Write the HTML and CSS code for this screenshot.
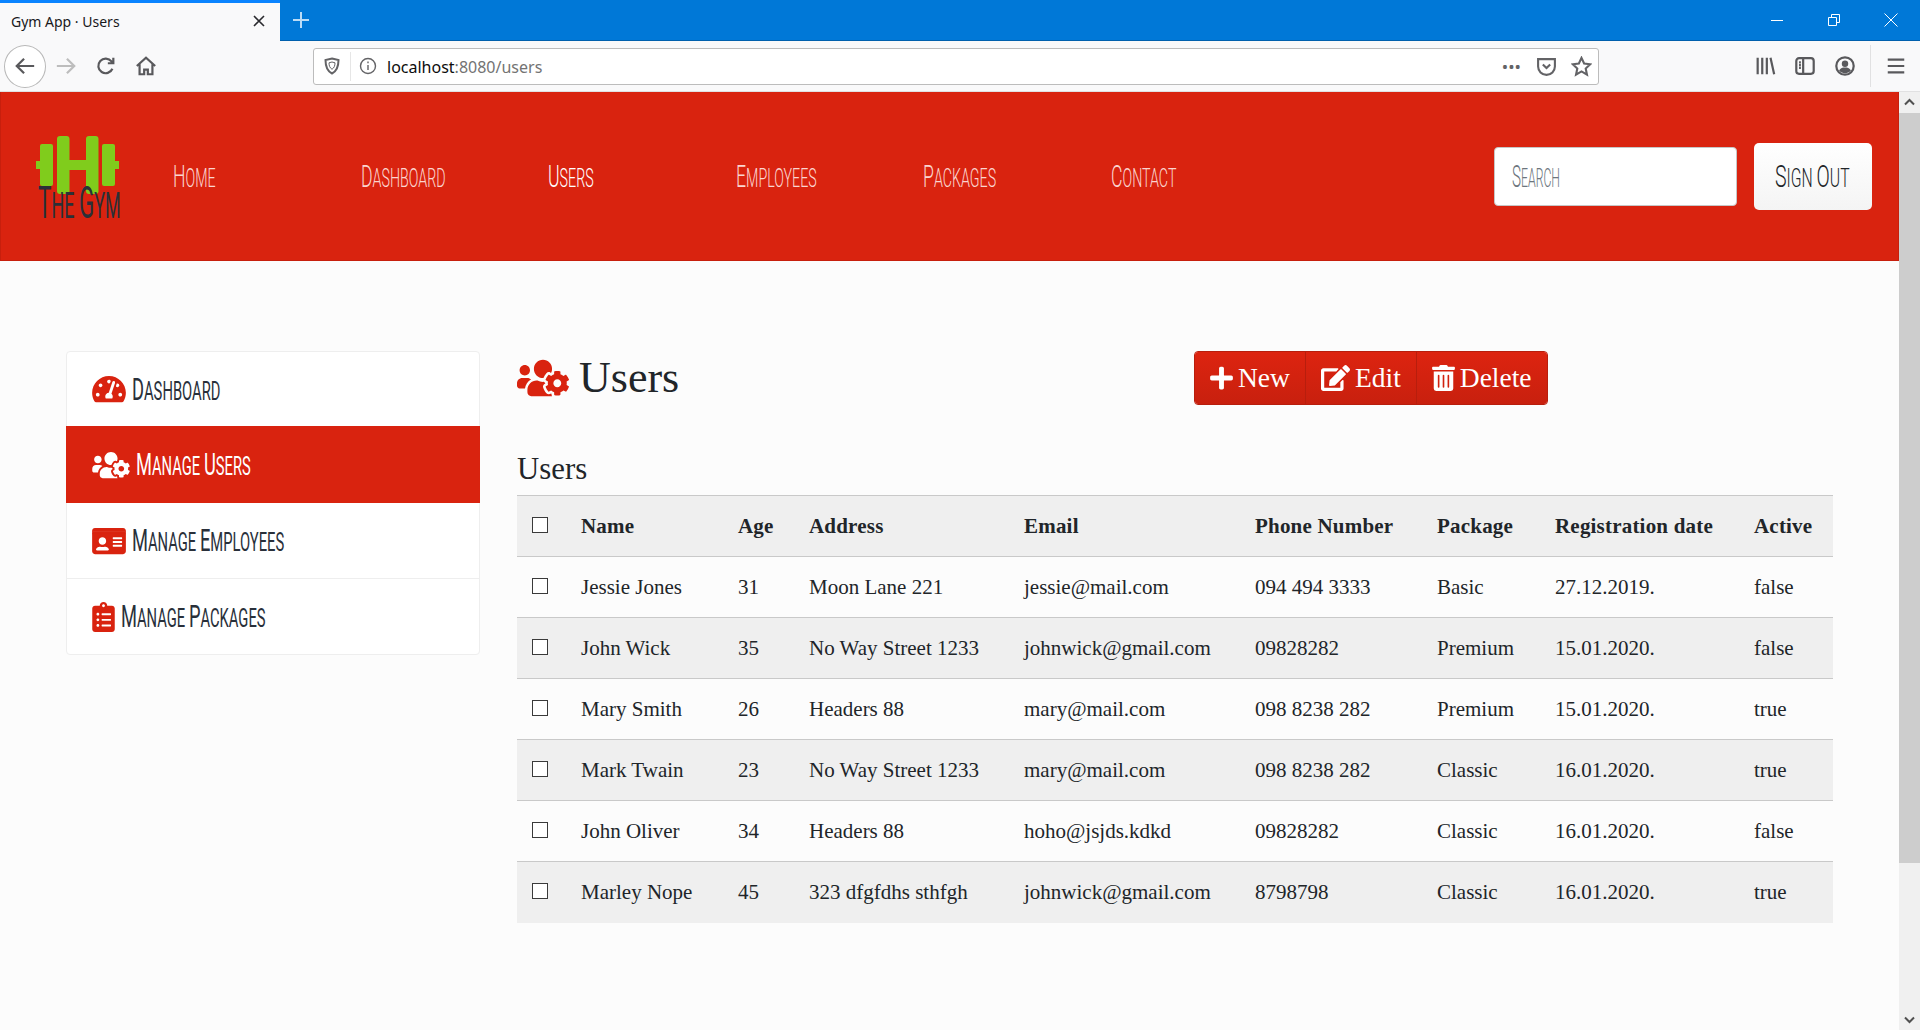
FILE: index.html
```html
<!DOCTYPE html>
<html lang="en">
<head>
    <meta charset="UTF-8">
    <title>Gym App - Users</title>
    <link rel="stylesheet" href="styles.css">
</head>
<body>
    <div class="tabbar">
        <div class="tab">
            <span class="tab-title">Gym App · Users</span>
            <svg class="tab-close" viewBox="0 0 16 16"><path d="M3 3l10 10M13 3L3 13"/></svg>
        </div>
        <svg class="new-tab" viewBox="0 0 18 18"><path d="M9 1v16M1 9h16"/></svg>
        <div class="window-controls">
            <svg viewBox="0 0 14 14"><path d="M1 7.5h12"/></svg>
            <svg viewBox="0 0 14 14"><path d="M1.5 4.5h8v8h-8zM4.5 4.500v-3h8v8h-3"/></svg>
            <svg viewBox="0 0 14 14"><path d="M.5.5l13 13M13.500.5l-13 13"/></svg>
        </div>
    </div>

    <div class="toolbar">
        <div class="back-button">
            <svg class="tool-icon" viewBox="0 0 24 24"><path d="M22 12H3M11 4l-8 8 8 8"/></svg>
        </div>
        <svg class="tool-icon forward" viewBox="0 0 24 24"><path d="M2 12h19M13 4l8 8-8 8"/></svg>
        <svg class="tool-icon reload" viewBox="0 0 24 24"><path d="M19 15a8 8 0 1 1-1-8l2 2M20 3v6h-6"/></svg>
        <svg class="tool-icon home" viewBox="0 0 24 24"><path d="M2 12L12 3l10 9M5 10v11h5v-5h4v5h5V10"/></svg>
        <div class="urlbar">
            <svg class="url-icon shield" viewBox="0 0 16 18"><path d="M8 1.500l6.500 1.500c0 7-1.500 11-6.500 13.500C3 14 1.500 10 1.500 3z"/><path class="shield-inner" d="M8 5l3 .8c0 3-.8 5-3 6.500-2.200-1.500-3-3.500-3-6.500z"/></svg>
            <span class="url-divider"></span>
            <svg class="url-icon info" viewBox="0 0 18 18"><circle cx="9" cy="9" r="7.500"/><path d="M9 8v5M9 4.500v1.800"/></svg>
            <span class="url-text">localhost<span class="url-muted">:8080/users</span></span>
            <span class="url-dots">•••</span>
            <svg class="url-icon pocket" viewBox="0 0 20 20"><path d="M2 3h16v7a8 8 0 0 1-16 0z"/><path d="M6.500 8l3.500 3.500L13.500 8"/></svg>
            <svg class="url-icon star" viewBox="0 0 20 20"><path d="M10 1.800l2.500 5.400 5.800.7-4.300 4 1.200 5.800-5.200-3-5.200 3L6 11.900l-4.300-4 5.800-.7z"/></svg>
        </div>
        <div class="tool-right">
            <svg class="tool-icon" viewBox="0 0 24 24"><path d="M4 3v18M9 3v18M14 3v18M18 3l4 18"/></svg>
            <svg class="tool-icon" viewBox="0 0 24 24"><rect x="2.500" y="3.500" width="19" height="17" rx="3"/><path d="M10 3.500v17M5.500 8h2M5.500 11h2M5.500 14h2"/></svg>
            <svg class="tool-icon" viewBox="0 0 24 24"><circle cx="12" cy="12" r="9.500"/><circle class="solid" cx="12" cy="9.500" r="3.500"/><path class="solid" d="M5.500 17c1.500-3 4-3.500 6.500-3.500s5 .5 6.500 3.500c-3.500 3.800-9.500 3.800-13 0z"/></svg>
            <span class="tool-divider"></span>
            <svg class="tool-icon" viewBox="0 0 24 24"><path d="M3 5h18M3 12h18M3 19h18"/></svg>
        </div>
    </div>

    <div class="viewport">
        <div class="page">
            <header class="navbar">
                <a class="brand">
                    <svg class="brand-mark" viewBox="0 0 83 58">
                        <rect x="0" y="25" width="5" height="8"/>
                        <rect x="78" y="25" width="5" height="8"/>
                        <rect x="4" y="8" width="13" height="42" rx="2"/>
                        <rect x="21" y="0" width="12.500" height="58" rx="3"/>
                        <rect x="50" y="0" width="12.500" height="58" rx="3"/>
                        <rect x="66" y="8" width="13" height="42" rx="2"/>
                        <rect x="30" y="24" width="24" height="10"/>
                    </svg>
                    <span class="brand-name narrow"><span class="cap">T</span>he <span class="cap">G</span>ym</span>
                </a>
                <nav class="nav-links">
                    <a class="nav-link dim"><span class="narrow"><span class="cap">H</span>ome</span></a>
                    <a class="nav-link dim"><span class="narrow"><span class="cap">D</span>ashboard</span></a>
                    <a class="nav-link"><span class="narrow"><span class="cap">U</span>sers</span></a>
                    <a class="nav-link dim"><span class="narrow"><span class="cap">E</span>mployees</span></a>
                    <a class="nav-link dim"><span class="narrow"><span class="cap">P</span>ackages</span></a>
                    <a class="nav-link dim"><span class="narrow"><span class="cap">C</span>ontact</span></a>
                </nav>
                <div class="search-box"><span class="narrow"><span class="cap">S</span>earch</span></div>
                <button class="signout"><span class="narrow"><span class="cap">S</span>ign <span class="cap">O</span>ut</span></button>
            </header>

            <main class="content">
                <aside class="side-menu">
                    <a class="side-item">
                        <svg class="side-icon gauge" viewBox="0 0 576 512"><path d="M288 32C128.94 32 0 160.94 0 320c0 52.800 14.250 102.260 39.060 144.800 5.610 9.620 16.300 15.200 27.440 15.200h443c11.140 0 21.830-5.580 27.440-15.200C561.750 422.260 576 372.800 576 320c0-159.060-128.940-288-288-288zm0 64c14.710 0 26.580 10.130 30.320 23.650-1.110 2.260-2.640 4.230-3.450 6.670l-9.220 27.670c-5.130 3.490-10.970 6.010-17.640 6.010-17.670 0-32-14.330-32-32S270.330 96 288 96zM96 384c-17.670 0-32-14.330-32-32s14.330-32 32-32 32 14.330 32 32-14.330 32-32 32zm48-160c-17.670 0-32-14.330-32-32s14.330-32 32-32 32 14.330 32 32-14.330 32-32 32zm246.770-72.410l-61.330 184C343.130 347.330 352 364.540 352 384c0 11.720-3.380 22.550-8.880 32H232.880c-5.500-9.450-8.880-20.280-8.880-32 0-33.940 26.500-61.430 59.900-63.590l61.340-184.010c4.170-12.560 17.730-19.450 30.360-15.170 12.570 4.190 19.350 17.790 15.170 30.360zm14.660 57.200l15.520-46.550c3.470-1.290 7.130-2.230 11.050-2.230 17.670 0 32 14.330 32 32s-14.330 32-32 32c-11.380-.01-20.890-6.280-26.570-15.220zM480 384c-17.670 0-32-14.330-32-32s14.330-32 32-32 32 14.330 32 32-14.330 32-32 32z"/></svg>
                        <span class="narrow"><span class="cap">D</span>ashboard</span>
                    </a>
                    <a class="side-item active">
                        <svg class="side-icon cog" viewBox="0 0 640 512"><use href="#users-cog"/></svg>
                        <span class="narrow"><span class="cap">M</span>anage <span class="cap">U</span>sers</span>
                    </a>
                    <a class="side-item">
                        <svg class="side-icon card" viewBox="0 0 576 512"><rect x="0" y="90" width="576" height="50"/><path d="M528 32H48C21.500 32 0 53.500 0 80v16h576V80c0-26.500-21.500-48-48-48zM0 432c0 26.500 21.500 48 48 48h480c26.500 0 48-21.500 48-48V128H0v304zm352-232c0-4.400 3.600-8 8-8h144c4.400 0 8 3.600 8 8v16c0 4.400-3.600 8-8 8H360c-4.400 0-8-3.600-8-8v-16zm0 64c0-4.400 3.600-8 8-8h144c4.400 0 8 3.600 8 8v16c0 4.400-3.600 8-8 8H360c-4.400 0-8-3.600-8-8v-16zm0 64c0-4.400 3.600-8 8-8h144c4.400 0 8 3.600 8 8v16c0 4.400-3.600 8-8 8H360c-4.400 0-8-3.600-8-8v-16zM176 192c35.300 0 64 28.700 64 64s-28.700 64-64 64-64-28.700-64-64 28.700-64 64-64zM67.100 396.200C75.500 370.500 99.600 352 128 352h8.200c12.300 5.100 25.700 8 39.800 8s27.600-2.900 39.800-8h8.200c28.400 0 52.500 18.500 60.900 44.200 3.200 9.900-5.200 19.800-15.600 19.800H82.700c-10.400 0-18.800-10-15.600-19.800z"/></svg>
                        <span class="narrow"><span class="cap">M</span>anage <span class="cap">E</span>mployees</span>
                    </a>
                    <a class="side-item bordered">
                        <svg class="side-icon clip" viewBox="0 0 384 512"><path d="M336 64h-80c0-35.300-28.700-64-64-64s-64 28.700-64 64H48C21.500 64 0 85.500 0 112v352c0 26.500 21.500 48 48 48h288c26.500 0 48-21.500 48-48V112c0-26.500-21.500-48-48-48zM96 424c-13.300 0-24-10.700-24-24s10.700-24 24-24 24 10.700 24 24-10.700 24-24 24zm0-96c-13.300 0-24-10.700-24-24s10.700-24 24-24 24 10.700 24 24-10.700 24-24 24zm0-96c-13.300 0-24-10.700-24-24s10.700-24 24-24 24 10.700 24 24-10.700 24-24 24zm96-192c13.300 0 24 10.700 24 24s-10.700 24-24 24-24-10.700-24-24 10.700-24 24-24zm128 368c0 4.400-3.600 8-8 8H168c-4.400 0-8-3.600-8-8v-16c0-4.400 3.600-8 8-8h144c4.400 0 8 3.600 8 8v16zm0-96c0 4.400-3.600 8-8 8H168c-4.400 0-8-3.600-8-8v-16c0-4.400 3.600-8 8-8h144c4.400 0 8 3.600 8 8v16zm0-96c0 4.400-3.600 8-8 8H168c-4.400 0-8-3.600-8-8v-16c0-4.400 3.600-8 8-8h144c4.400 0 8 3.600 8 8v16z"/></svg>
                        <span class="narrow"><span class="cap">M</span>anage <span class="cap">P</span>ackages</span>
                    </a>
                </aside>

                <section class="users-panel">
                    <div class="panel-head">
                        <h1 class="page-title">
                            <svg class="title-icon" viewBox="0 0 640 512">
                                <defs>
                                    <path id="users-cog" d="M610.500 341.300c2.600-14.100 2.600-28.500 0-42.600l25.800-14.900c3-1.700 4.300-5.200 3.300-8.500-6.700-21.600-18.200-41.200-33.200-57.400-2.300-2.500-6-3.100-9-1.400l-25.800 14.900c-10.900-9.300-23.400-16.500-36.900-21.300v-29.800c0-3.400-2.400-6.400-5.700-7.100-22.300-5-45-4.800-66.200 0-3.300.7-5.700 3.700-5.700 7.100v29.800c-13.500 4.800-26 12-36.900 21.300l-25.800-14.900c-2.900-1.700-6.700-1.100-9 1.400-15 16.200-26.500 35.800-33.200 57.400-1 3.300.4 6.800 3.300 8.500l25.800 14.900c-2.600 14.100-2.600 28.500 0 42.600l-25.800 14.900c-3 1.700-4.300 5.200-3.300 8.500 6.700 21.600 18.200 41.100 33.200 57.400 2.300 2.500 6 3.100 9 1.400l25.800-14.900c10.900 9.300 23.400 16.500 36.900 21.300v29.800c0 3.400 2.400 6.400 5.700 7.100 22.300 5 45 4.800 66.200 0 3.300-.7 5.700-3.700 5.700-7.100v-29.800c13.500-4.800 26-12 36.900-21.300l25.800 14.900c2.900 1.700 6.700 1.100 9-1.400 15-16.200 26.500-35.800 33.200-57.400 1-3.300-.4-6.800-3.300-8.500l-25.800-14.900zM496 368.500c-26.800 0-48.500-21.800-48.500-48.500s21.800-48.500 48.500-48.500 48.500 21.800 48.500 48.500-21.700 48.500-48.500 48.500zM96 224c35.300 0 64-28.700 64-64s-28.700-64-64-64-64 28.700-64 64 28.700 64 64 64zm224 32c1.900 0 3.700-.5 5.600-.6 8.300-21.700 20.500-42.100 36.300-59.200 7.400-8 17.900-12.600 28.900-12.600 6.900 0 13.700 1.800 19.600 5.300l7.900 4.600c.8-.5 1.600-.9 2.400-1.400 7-14.600 11.200-30.800 11.200-48 0-61.900-50.100-112-112-112S208 82.100 208 144c0 61.900 50.100 112 112 112zm105.200 194.500c-2.300-1.200-4.600-2.600-6.800-3.900-8.200 4.800-15.300 9.800-27.500 9.800-10.900 0-21.400-4.600-28.900-12.600-18.300-19.800-32.300-43.900-40.200-69.600-10.700-34.500 24.900-49.700 25.800-50.300-.1-2.600-.1-5.200 0-7.800l-7.900-4.600c-3.800-2.200-7-5-9.800-8.100-3.300.2-6.500.6-9.800.6-24.600 0-47.600-6-68.500-16h-8.300C179.600 288 128 339.600 128 403.200V432c0 26.500 21.500 48 48 48h255.400c-3.700-6-6.200-12.800-6.200-20.300v-9.200zM173.100 274.600C161.500 263.100 145.600 256 128 256H64c-35.300 0-64 28.700-64 64v32c0 17.700 14.300 32 32 32h65.900c6.300-47.400 34.900-87.300 75.200-109.400z"/>
                                </defs>
                                <use href="#users-cog"/>
                            </svg>
                            Users
                        </h1>
                        <div class="btn-group">
                            <button class="btn">
                                <svg class="btn-icon" viewBox="0 0 448 512"><path d="M416 208H272V64c0-17.670-14.330-32-32-32h-32c-17.670 0-32 14.330-32 32v144H32c-17.670 0-32 14.330-32 32v32c0 17.670 14.330 32 32 32h144v144c0 17.670 14.330 32 32 32h32c17.670 0 32-14.330 32-32V304h144c17.670 0 32-14.330 32-32v-32c0-17.670-14.330-32-32-32z"/></svg>
                                New
                            </button>
                            <button class="btn">
                                <svg class="btn-icon" viewBox="0 0 576 512"><path d="M402.600 83.200l90.200 90.200c3.800 3.800 3.800 10 0 13.800L274.400 405.600l-92.800 10.300c-12.400 1.400-22.900-9.100-21.500-21.500l10.300-92.800L388.800 83.200c3.800-3.800 10-3.800 13.800 0zm162-22.900l-48.800-48.800c-15.200-15.200-39.900-15.200-55.200 0l-35.400 35.400c-3.800 3.800-3.800 10 0 13.800l90.200 90.200c3.800 3.800 10 3.800 13.800 0l35.400-35.400c15.200-15.300 15.200-40 0-55.200zM384 346.200V448H64V128h229.800c3.200 0 6.200-1.300 8.500-3.500l40-40c7.600-7.600 2.200-20.500-8.500-20.500H48C21.500 64 0 85.500 0 112v352c0 26.500 21.500 48 48 48h352c26.500 0 48-21.500 48-48V306.200c0-10.700-12.900-16-20.500-8.500l-40 40c-2.200 2.300-3.500 5.300-3.500 8.500z"/></svg>
                                Edit
                            </button>
                            <button class="btn">
                                <svg class="btn-icon" viewBox="0 0 448 512"><path d="M32 464a48 48 0 0 0 48 48h288a48 48 0 0 0 48-48V128H32zm272-256a16 16 0 0 1 32 0v224a16 16 0 0 1-32 0zm-96 0a16 16 0 0 1 32 0v224a16 16 0 0 1-32 0zm-96 0a16 16 0 0 1 32 0v224a16 16 0 0 1-32 0zM432 32H312l-9.400-18.700A24 24 0 0 0 281.100 0H166.800a23.720 23.720 0 0 0-21.400 13.300L136 32H16A16 16 0 0 0 0 48v32a16 16 0 0 0 16 16h416a16 16 0 0 0 16-16V48a16 16 0 0 0-16-16z"/></svg>
                                Delete
                            </button>
                        </div>
                    </div>

                    <h3 class="table-title">Users</h3>
                    <table class="users-table">
                        <thead>
                            <tr>
                                <th class="col-check"><input type="checkbox"></th>
                                <th class="col-name">Name</th>
                                <th class="col-age">Age</th>
                                <th class="col-address">Address</th>
                                <th class="col-email">Email</th>
                                <th class="col-phone">Phone Number</th>
                                <th class="col-package">Package</th>
                                <th class="col-date">Registration date</th>
                                <th class="col-active">Active</th>
                            </tr>
                        </thead>
                        <tbody>
                            <tr><td><input type="checkbox"></td><td>Jessie Jones</td><td>31</td><td>Moon Lane 221</td><td>jessie@mail.com</td><td>094 494 3333</td><td>Basic</td><td>27.12.2019.</td><td>false</td></tr>
                            <tr><td><input type="checkbox"></td><td>John Wick</td><td>35</td><td>No Way Street 1233</td><td>johnwick@gmail.com</td><td>09828282</td><td>Premium</td><td>15.01.2020.</td><td>false</td></tr>
                            <tr><td><input type="checkbox"></td><td>Mary Smith</td><td>26</td><td>Headers 88</td><td>mary@mail.com</td><td>098 8238 282</td><td>Premium</td><td>15.01.2020.</td><td>true</td></tr>
                            <tr><td><input type="checkbox"></td><td>Mark Twain</td><td>23</td><td>No Way Street 1233</td><td>mary@mail.com</td><td>098 8238 282</td><td>Classic</td><td>16.01.2020.</td><td>true</td></tr>
                            <tr><td><input type="checkbox"></td><td>John Oliver</td><td>34</td><td>Headers 88</td><td>hoho@jsjds.kdkd</td><td>09828282</td><td>Classic</td><td>16.01.2020.</td><td>false</td></tr>
                            <tr><td><input type="checkbox"></td><td>Marley Nope</td><td>45</td><td>323 dfgfdhs sthfgh</td><td>johnwick@gmail.com</td><td>8798798</td><td>Classic</td><td>16.01.2020.</td><td>true</td></tr>
                        </tbody>
                    </table>
                </section>
            </main>
        </div>

        <div class="scrollbar">
            <svg class="scroll-arrow" viewBox="0 0 21 21"><path d="M6 12.500l4.500-4.500 4.500 4.500"/></svg>
            <div class="scroll-thumb"></div>
            <div class="scroll-track"></div>
            <svg class="scroll-arrow" viewBox="0 0 21 21"><path d="M6 8.500l4.500 4.500 4.500-4.500"/></svg>
        </div>
    </div>
</body>
</html>
```

FILE: styles.css
```css
* {
    box-sizing: border-box;
}
html, body {
    height: 100%;
}
body {
    margin: 0;
    overflow: hidden;
    display: flex;
    flex-direction: column;
    background: #fcfcfc;
    color: #212529;
    font-family: "Liberation Serif", serif;
}

/* browser chrome */
.tabbar {
    height: 41px;
    flex: none;
    display: flex;
    align-items: flex-start;
    background: #0078d7;
    border-bottom: 1px solid #0060ad;
}
.tab {
    width: 280px;
    height: 41px;
    display: flex;
    align-items: center;
    justify-content: space-between;
    padding: 0 13px 2px 11px;
    background: #f9f9fa;
    border-top: 3px solid #0a84ff;
    color: #18181a;
    font: 14px "Noto Sans", sans-serif;
}
.tab-close {
    width: 16px;
    height: 16px;
    fill: none;
    stroke: #2a2a2e;
    stroke-width: 1.6;
}
.new-tab {
    width: 18px;
    height: 18px;
    margin: 11px 0 0 12px;
    fill: none;
    stroke: #bcdcf6;
    stroke-width: 2;
}
.window-controls {
    margin-left: auto;
    display: flex;
    gap: 43px;
    padding: 13px 22px 0 0;
}
.window-controls svg {
    width: 14px;
    height: 14px;
    fill: none;
    stroke: #fff;
    stroke-width: 1;
}
.toolbar {
    height: 51px;
    flex: none;
    display: flex;
    align-items: center;
    background: #f9f9fa;
    border-bottom: 1px solid #e1e1e2;
}
.tool-icon {
    width: 22px;
    height: 22px;
    fill: none;
    stroke: #59595c;
    stroke-width: 2.400;
}
.tool-icon .solid {
    fill: #59595c;
    stroke: none;
}
.back-button {
    width: 42px;
    height: 43px;
    margin-left: 4px;
    display: flex;
    align-items: center;
    justify-content: center;
    background: #fff;
    border: 1px solid #b8b8b8;
    border-radius: 50%;
}
.forward {
    margin-left: 9px;
    stroke: #bdbdbd;
}
.reload {
    margin-left: 18px;
}
.home {
    margin-left: 18px;
}
.urlbar {
    width: 1286px;
    height: 37px;
    margin-left: 156px;
    padding: 0 6px 0 10px;
    display: flex;
    align-items: center;
    background: #fff;
    border: 1px solid #bcbcbc;
    border-radius: 3px;
}
.url-icon {
    flex: none;
    fill: none;
    stroke: #636366;
    stroke-width: 2;
}
.shield {
    width: 16px;
    height: 18px;
}
.shield-inner {
    fill: #fff;
    stroke-width: 1;
}
.url-divider {
    width: 1px;
    height: 29px;
    margin-left: 10px;
    background: #e6e6e6;
}
.info {
    width: 18px;
    height: 18px;
    margin-left: 8px;
    stroke-width: 1.400;
}
.url-text {
    margin-left: 10px;
    padding-top: 2px;
    flex: 1;
    color: #0c0c0d;
    font: 16px "Noto Sans", sans-serif;
}
.url-muted {
    color: #737373;
}
.url-dots {
    color: #636366;
    font: 17px "Noto Sans", sans-serif;
    letter-spacing: 0;
}
.pocket {
    width: 21px;
    height: 21px;
    margin-left: 15px;
    stroke-width: 2;
}
.star {
    width: 21px;
    height: 21px;
    margin-left: 14px;
    stroke-width: 2;
}
.tool-right {
    margin-left: 155px;
    display: flex;
    align-items: center;
    gap: 18px;
}
.tool-divider {
    width: 1px;
    height: 42px;
    margin: 0 -4px 0 -4px;
    background: #e1e1e2;
}

.viewport {
    flex: 1;
    min-height: 0;
    display: flex;
}
.page {
    flex: 1;
    min-width: 0;
}

/* the headline font is not installed, so a light sans gets squeezed */
.narrow {
    display: inline-block;
    transform: scaleX(0.57);
    transform-origin: left center;
    white-space: nowrap;
    font-family: Roboto, "Liberation Sans", sans-serif;
    font-weight: 300;
    font-size: 25px;
    text-transform: uppercase;
    line-height: 1;
}
.cap {
    font-size: 31px;
}

/* navbar */
.navbar {
    height: 169px;
    display: flex;
    align-items: center;
    background: #d9230f;
    border: 1px solid #c71f0d;
    border-top: 0;
    color: #fff;
}
.brand {
    position: relative;
    width: 172px;
    height: 81px;
    flex: none;
    align-self: flex-start;
    padding: 0 0 0 35px;
    margin-top: 44px;
}
.brand-mark {
    display: block;
    width: 83px;
    height: 58px;
    fill: #80cc1c;
}
.navbar .brand-name {
    position: absolute;
    left: 37px;
    bottom: -8px;
    transform: scaleX(0.5);
    color: #2b3038;
    font-size: 36px;
    font-weight: 400;
}
.brand-name .cap {
    font-size: 45px;
}
.nav-links {
    display: flex;
}
.nav-link {
    width: 187.500px;
    color: #fbd5d0;
}
.nav-link:nth-child(3) {
    color: #fff;
}
.search-box {
    width: 243px;
    height: 59px;
    margin-left: auto;
    padding: 0 17px;
    display: flex;
    align-items: center;
    background: #fff;
    border: 1px solid #c6c6c6;
    border-radius: 4px;
    color: #6c757d;
}
.search-box .narrow {
    transform: scaleX(0.49);
}
.signout {
    width: 118px;
    height: 67px;
    margin: 0 26px 0 17px;
    padding: 0 0 0 21px;
    text-align: left;
    background: linear-gradient(#fff, #f4f4f4);
    border: 0;
    border-radius: 5px;
    color: #212529;
}
.signout .narrow {
    transform: scaleX(0.63);
}

/* main area */
.content {
    display: flex;
    gap: 37px;
    padding: 90px 66px 0;
}
.side-menu {
    width: 414px;
    flex: none;
    align-self: flex-start;
    background: #fff;
    border: 1px solid #eeeeee;
    border-radius: 4px;
}
.side-item {
    height: 74px;
    padding-left: 25px;
    display: flex;
    align-items: center;
    gap: 6px;
    color: #29303a;
}
.side-item .narrow {
    transform: scaleX(0.59);
    font-weight: 400;
}
.side-item.active {
    height: 77px;
    margin: 0 -1px;
    padding-left: 26px;
    background: #d9230f;
    color: #fff;
}
.side-item.active + .side-item {
    height: 75px;
}
.side-item.bordered {
    height: 76px;
    border-top: 1px solid #eeeeee;
}
.side-icon {
    flex: none;
    fill: #d9230f;
}
.active .side-icon {
    fill: #fff;
}
.gauge {
    width: 34px;
    height: 30px;
}
.cog {
    width: 38px;
    height: 30px;
}
.card {
    width: 34px;
    height: 30px;
}
.clip {
    width: 23px;
    height: 30px;
}

.users-panel {
    width: 1316px;
    flex: none;
}
.panel-head {
    display: flex;
    align-items: flex-start;
}
.page-title {
    width: 677px;
    height: 54px;
    margin: 0;
    display: flex;
    align-items: center;
    gap: 10px;
    font-size: 44px;
    font-weight: 400;
    line-height: 1;
}
.title-icon {
    width: 52px;
    height: 42px;
    fill: #d9230f;
}
.btn-group {
    display: flex;
    height: 54px;
    border: 1px solid #b81e0d;
    border-radius: 4px;
    overflow: hidden;
}
.btn {
    padding: 0 15px;
    display: flex;
    align-items: center;
    gap: 5px;
    background: linear-gradient(#dd2410, #c8200e);
    border: 0;
    border-left: 1px solid #b81e0d;
    color: #fff;
    font-family: "Liberation Serif", serif;
    font-size: 27.500px;
}
.btn:first-child {
    border-left: 0;
}
.btn-icon {
    height: 26px;
    width: auto;
    fill: #fff;
}
.btn-icon[viewBox^="0 0 448"] {
    width: 23px;
}
.btn-icon[viewBox^="0 0 576"] {
    width: 29px;
}
.table-title {
    margin: 46px 0 0;
    height: 44px;
    font-size: 30.800px;
    font-weight: 400;
    line-height: 36px;
}
.users-table {
    width: 100%;
    table-layout: fixed;
    border-collapse: collapse;
    font-size: 21px;
}
.users-table th,
.users-table td {
    height: 61px;
    padding: 0 0 0 15px;
    text-align: left;
    border-top: 1px solid #c9c9c9;
    white-space: nowrap;
}
.users-table th {
    letter-spacing: 0.2px;
}
.users-table thead tr,
.users-table tbody tr:nth-child(even) {
    background: #efefef;
}
.users-table input {
    display: block;
    width: 16px;
    height: 16px;
    margin: -3px 0 0;
    appearance: none;
    background: #fff;
    border: 1px solid #3a3a3a;
    border-radius: 0;
}
.col-check { width: 49px; }
.col-name { width: 157px; }
.col-age { width: 71px; }
.col-address { width: 215px; }
.col-email { width: 231px; }
.col-phone { width: 182px; }
.col-package { width: 118px; }
.col-date { width: 199px; }
.col-active { width: 94px; }

/* drawn scrollbar */
.scrollbar {
    width: 21px;
    flex: none;
    display: flex;
    flex-direction: column;
    background: #f0f0f0;
}
.scroll-arrow {
    width: 21px;
    height: 21px;
    flex: none;
    fill: none;
    stroke: #505050;
    stroke-width: 2;
}
.scroll-thumb {
    height: 750px;
    flex: none;
    background: #cdcdcd;
}
.scroll-track {
    flex: 1;
}
```
